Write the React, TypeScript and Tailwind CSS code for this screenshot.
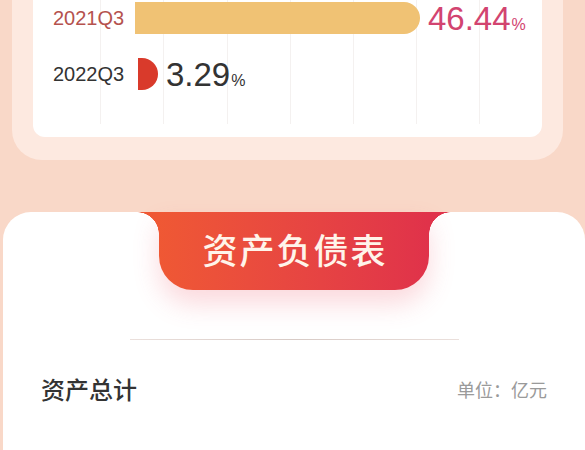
const rows = [
  { label: '2021Q3', value: '46.44', width: 285, labelColor: 'text-[#b5524e]', valueColor: 'text-[#d24470]', bar: 'bg-[#f0c274]' },
  { label: '2022Q3', value: '3.29', width: 20, labelColor: 'text-[#333333]', valueColor: 'text-[#333333]', bar: 'bg-[#d93a2b]' },
];

const gridX = [67, 130, 194, 257, 320, 383, 446];

export default function App() {
  return (
    <div className="h-[450px] w-[585px] overflow-hidden bg-[#f9d8c8] font-['Liberation_Sans','Noto_Sans_CJK_SC',sans-serif]">
      {/* chart frame */}
      <div className="ml-3 w-[551px] rounded-b-[30px] bg-[#fde9e0] px-[21px] pb-[23px]">
        <div className="relative h-[137px] rounded-b-[12px] bg-white pl-5 pt-[2px]">
          {/* grid lines */}
          <div className="pointer-events-none absolute inset-x-0 top-0 h-[124px]">
            {gridX.map((x) => (
              <div key={x} className="absolute top-0 h-full w-px bg-[#f4f1f0]" style={{ left: x }} />
            ))}
          </div>

          <div className="relative flex flex-col gap-6">
            {rows.map((r) => (
              <div key={r.label} className="flex h-8 items-center">
                <span className={`w-[82px] text-[20px] leading-none ${r.labelColor}`}>{r.label}</span>
                <div className={`h-8 rounded-r-full ${r.bar}`} style={{ width: r.width, marginLeft: r.width > 40 ? 0 : 3 }} />
                <span className={`ml-2 flex items-baseline leading-none ${r.valueColor}`}>
                  <span className="text-[33px]">{r.value}</span>
                  <span className="ml-[1px] text-[16px]">%</span>
                </span>
              </div>
            ))}
          </div>
        </div>
      </div>

      {/* balance sheet card */}
      <div className="ml-[3px] mt-[52px] flex h-[300px] w-[582px] flex-col items-center rounded-t-[28px] bg-white">
        <div className="relative flex h-[78px] w-[314px] justify-center">
          <div className="absolute left-0 top-0 h-[22px] w-[22px] bg-[radial-gradient(circle_at_0_100%,transparent_21.5px,#ef5834_22px)]" />
          <div className="absolute right-0 top-0 h-[22px] w-[22px] bg-[radial-gradient(circle_at_100%_100%,transparent_21.5px,#e0324a_22px)]" />
          <div className="flex h-full w-[270px] items-center justify-center rounded-b-[34px] bg-gradient-to-r from-[#ef5834] to-[#e0324a] pb-[5px] shadow-[0_14px_26px_rgba(238,80,100,0.22)]">
            <span className="pl-[2px] text-[35px] font-medium leading-none tracking-[2px] text-[#fff4ea] font-['Noto_Sans_CJK_SC',sans-serif]">
              资产负债表
            </span>
          </div>
        </div>

        <div className="mt-[49px] h-px w-[329px] bg-gradient-to-r from-[#ebe0dc] via-[#d8cbc6] to-[#ebe0dc]" />

        <div className="mt-[37px] flex w-full items-center justify-between px-[38px] font-['Noto_Sans_CJK_SC',sans-serif]">
          <span className="text-[24px] font-medium leading-none text-[#333333]">资产总计</span>
          <span className="text-[18px] leading-none text-[#9a9a9a]">单位：亿元</span>
        </div>
      </div>
    </div>
  );
}
